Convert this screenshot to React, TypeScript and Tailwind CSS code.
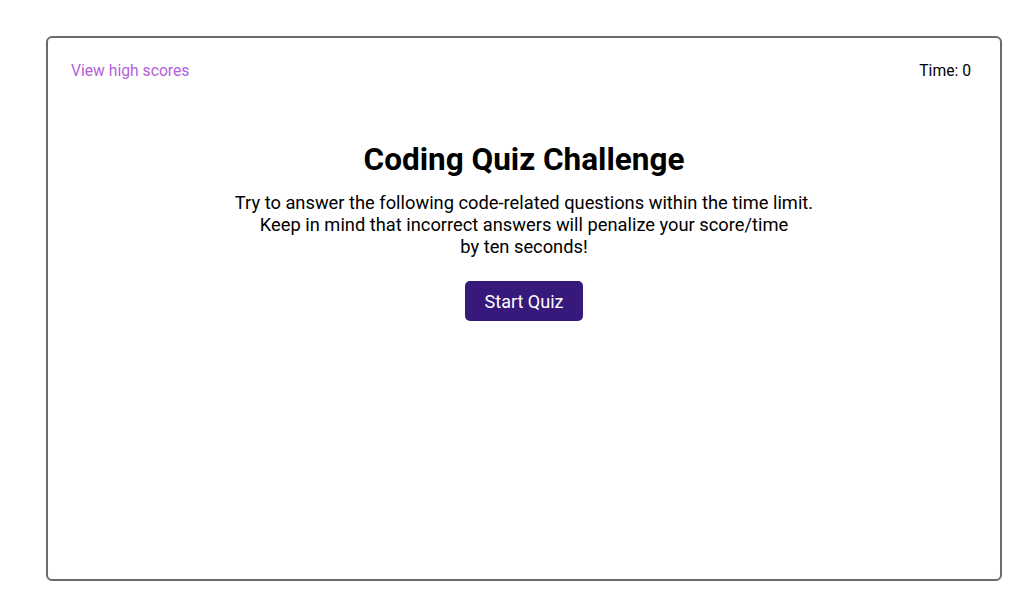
export default function App() {
  return (
    <div className="h-screen overflow-hidden bg-white pl-[46px] pr-[32px] pt-[36px] font-['Roboto',sans-serif]">
      <div className="flex h-[545px] flex-col rounded-[6px] border-2 border-[#6b6b6b] px-[23px] pt-[23px]">
        <header className="flex items-center justify-between pr-[6px] text-[15.7px] leading-[20px]">
          <a href="#" className="text-[#b45fdd]">
            View high scores
          </a>
          <span className="text-black">Time: 0</span>
        </header>
        <main className="mt-[60px] flex flex-col items-center text-center">
          <h1 className="text-[31.5px] font-bold leading-[38px] text-black">
            Coding Quiz Challenge
          </h1>
          <p className="mt-[13px] max-w-[640px] text-[18.3px] leading-[22px] text-black">
            Try to answer the following code-related questions within the time limit.
            <br />
            Keep in mind that incorrect answers will penalize your score/time
            <br />
            by ten seconds!
          </p>
          <button className="mt-[23px] h-[40px] w-[118px] rounded-[5px] bg-[#36197a] text-[18px] text-white">
            Start Quiz
          </button>
        </main>
      </div>
    </div>
  );
}
